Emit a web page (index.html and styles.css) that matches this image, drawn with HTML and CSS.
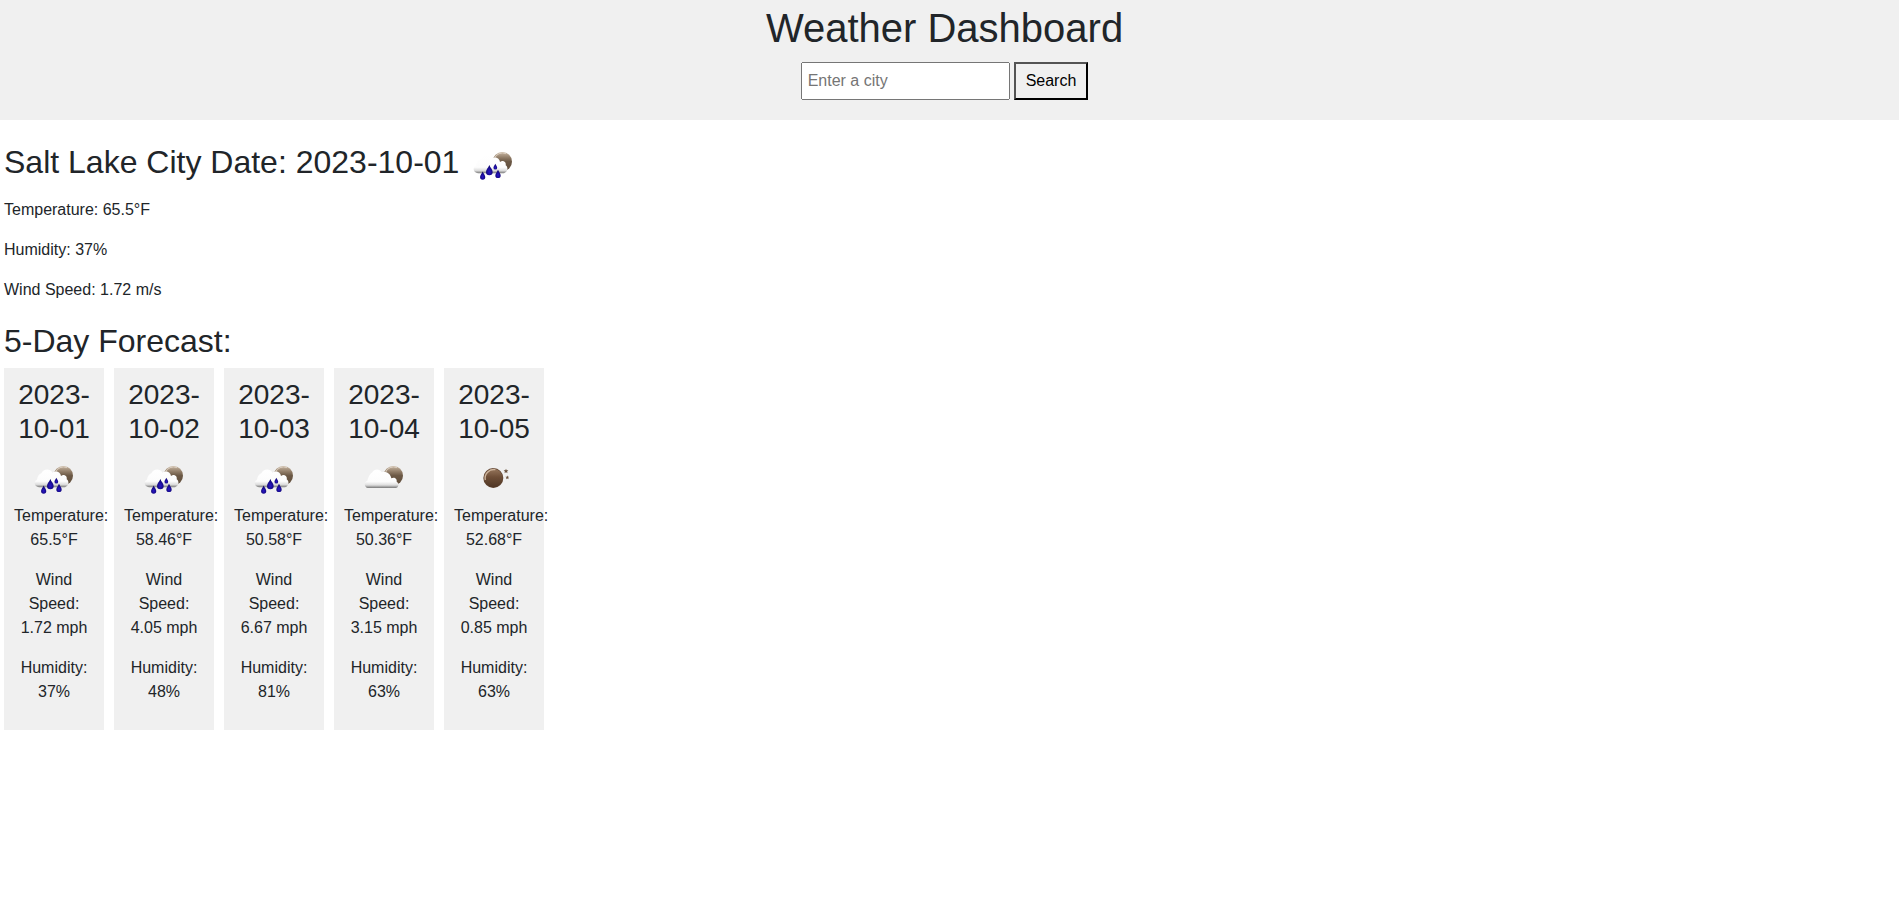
FILE: index.html
```html
<!DOCTYPE html>
<html lang="en">
<head>
<meta charset="utf-8">
<title>Weather Dashboard</title>
<link rel="stylesheet" href="styles.css">
</head>
<body>
<svg class="defs" aria-hidden="true">
  <defs>
    <linearGradient id="moon-fill" x1="0" y1="0" x2="0" y2="1">
      <stop offset="0" stop-color="#c9b8a4"/><stop offset=".3" stop-color="#8f7b66"/><stop offset=".5" stop-color="#6b5845"/><stop offset="1" stop-color="#5f4d3b"/>
    </linearGradient>
    <linearGradient id="clear-fill" x1="0" y1="0" x2="0" y2="1">
      <stop offset="0" stop-color="#96765c"/><stop offset=".45" stop-color="#6e4e37"/><stop offset="1" stop-color="#4f3625"/>
    </linearGradient>
    <linearGradient id="cloud-fill" x1="0" y1="0" x2="0" y2="1">
      <stop offset="0" stop-color="#fff"/><stop offset=".66" stop-color="#fcfcfc"/><stop offset=".84" stop-color="#ddd"/><stop offset=".92" stop-color="#aaa"/><stop offset="1" stop-color="#777"/>
    </linearGradient>
    <radialGradient id="drop-fill" cx=".5" cy=".65" r=".6">
      <stop offset="0" stop-color="#2a16c8"/><stop offset="1" stop-color="#0c0468"/>
    </radialGradient>
    <path id="drop" d="M0-17C3-9 10-3 10 4A10 10 0 0 1-10 4C-10-3-3-9 0-17Z" fill="url(#drop-fill)"/>
    <path id="star" d="M0-7L2-2 7-2 3 2 5 7 0 4-5 7-3 2-7-2-2-2Z" fill="#69503c"/>
    <symbol id="cloudy" viewBox="12 -6 150 150">
      <circle cx="115" cy="59" r="29" fill="url(#moon-fill)"/>
      <path d="M91 50A26 26 0 0 1 126 35" fill="none" stroke="#dccfc0" stroke-width="3"/>
      <path d="M39 96C27 94 26 78 37 74C40 64 44 54 52 49C58 38 74 38 80 49C92 46 106 51 109 67C118 61 127 69 125 77C134 82 131 95 122 96Z" fill="url(#cloud-fill)"/>
    </symbol>
    <symbol id="rain" viewBox="12 -6 150 150">
      <circle cx="115" cy="59" r="29" fill="url(#moon-fill)"/>
      <path d="M91 50A26 26 0 0 1 126 35" fill="none" stroke="#dccfc0" stroke-width="3"/>
      <path d="M42 94C27 91 25 76 36 71C38 59 43 54 49 52C54 37 77 37 82 50C95 42 107 50 108 60C117 52 128 61 125 70C134 76 131 90 120 94Z" fill="url(#cloud-fill)"/>
      <use href="#drop" x="76" y="86"/>
      <use href="#drop" transform="translate(56 102) scale(.78)"/>
      <use href="#drop" transform="translate(102 97) scale(.8)"/>
      <use href="#drop" transform="translate(94 75) scale(.56)"/>
    </symbol>
    <symbol id="clear" viewBox="-3 -6 150 150">
      <circle cx="70" cy="66" r="30" fill="#5f4330"/>
      <circle cx="70" cy="66" r="28" fill="url(#clear-fill)"/>
      <path d="M46 72A26 26 0 0 1 76 41" fill="none" stroke="#cdb59e" stroke-width="4"/>
      <use href="#star" x="108" y="45"/>
      <use href="#star" transform="translate(112 64) scale(.8)"/>
    </symbol>
  </defs>
</svg>

<header class="header">
  <h1 class="title">Weather Dashboard</h1>
  <form class="search">
    <input class="search-input" type="text" placeholder="Enter a city" aria-label="City">
    <button class="search-button" type="button">Search</button>
  </form>
</header>

<main class="main">
  <section class="current">
    <h2 class="heading current-heading">Salt Lake City Date: 2023-10-01 <svg class="icon" role="img" aria-label="Rain"><use href="#rain"/></svg></h2>
    <p class="text">Temperature: 65.5°F</p>
    <p class="text">Humidity: 37%</p>
    <p class="text">Wind Speed: 1.72 m/s</p>
  </section>
  <section>
    <h2 class="heading">5-Day Forecast:</h2>
    <div class="forecast">
      <article class="card">
        <h3 class="date">2023-10-01</h3>
        <svg class="icon" role="img" aria-label="Rain"><use href="#rain"/></svg>
        <p class="text">Temperature: 65.5°F</p>
        <p class="text">Wind Speed: 1.72 mph</p>
        <p class="text">Humidity: 37%</p>
      </article>
      <article class="card">
        <h3 class="date">2023-10-02</h3>
        <svg class="icon" role="img" aria-label="Rain"><use href="#rain"/></svg>
        <p class="text">Temperature: 58.46°F</p>
        <p class="text">Wind Speed: 4.05 mph</p>
        <p class="text">Humidity: 48%</p>
      </article>
      <article class="card">
        <h3 class="date">2023-10-03</h3>
        <svg class="icon" role="img" aria-label="Rain"><use href="#rain"/></svg>
        <p class="text">Temperature: 50.58°F</p>
        <p class="text">Wind Speed: 6.67 mph</p>
        <p class="text">Humidity: 81%</p>
      </article>
      <article class="card">
        <h3 class="date">2023-10-04</h3>
        <svg class="icon" role="img" aria-label="Cloudy"><use href="#cloudy"/></svg>
        <p class="text">Temperature: 50.36°F</p>
        <p class="text">Wind Speed: 3.15 mph</p>
        <p class="text">Humidity: 63%</p>
      </article>
      <article class="card">
        <h3 class="date">2023-10-05</h3>
        <svg class="icon" role="img" aria-label="Clear"><use href="#clear"/></svg>
        <p class="text">Temperature: 52.68°F</p>
        <p class="text">Wind Speed: 0.85 mph</p>
        <p class="text">Humidity: 63%</p>
      </article>
    </div>
  </section>
</main>
</body>
</html>
```
FILE: styles.css
```css
* {
  box-sizing: border-box;
}

body {
  margin: 0;
  background: #fff;
  color: #212529;
  font-family: "Liberation Sans", Arial, sans-serif;
  font-size: 16px;
  line-height: 24px;
}

.defs {
  position: absolute;
  width: 0;
  height: 0;
}

.header {
  padding: 4px 10px 20px 0;
  background: #f0f0f0;
  text-align: center;
}

.title {
  margin: 0 0 10px;
  font-size: 40px;
  font-weight: 500;
  line-height: 48px;
}

.search {
  display: flex;
  justify-content: center;
  gap: 4px;
}

.search-input {
  width: 209px;
  padding: 5px;
  font: inherit;
}

.search-button {
  padding: 5px 10px;
  border: 2px outset #000;
  background: #f0f0f0;
  color: #000;
  font: inherit;
}

.main {
  padding: 20px 4px;
}

.current {
  margin-bottom: 20px;
}

.heading {
  margin: 0 0 8px;
  font-size: 32px;
  font-weight: 500;
  line-height: 38px;
}

.current-heading .icon {
  vertical-align: middle;
}

.icon {
  width: 50px;
  height: 50px;
}

.text {
  margin: 0 0 16px;
}

.current .text:last-child {
  margin-bottom: 0;
}

.forecast {
  display: flex;
  gap: 10px;
}

.card {
  width: 100px;
  padding: 10px;
  background: #f0f0f0;
  text-align: center;
}

.card .icon {
  display: block;
  margin: 0 auto;
}

.date {
  margin: 0 0 8px;
  font-size: 28px;
  font-weight: 500;
  line-height: 34px;
}
```
